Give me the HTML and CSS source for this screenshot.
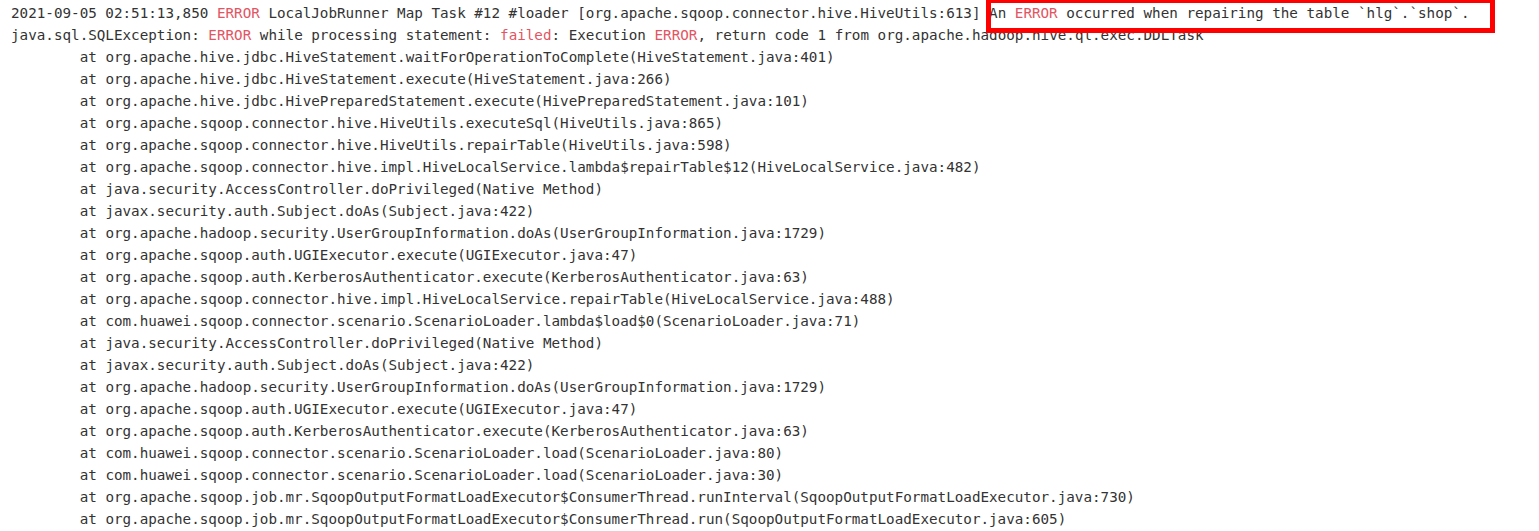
FILE: index.html
```html
<!DOCTYPE html>
<html lang="en">
<head>
<meta charset="utf-8">
<title>Log</title>
<link rel="stylesheet" href="styles.css">
</head>
<body>
<pre class="log">2021-09-05 02:51:13,850 <span class="err">ERROR</span> LocalJobRunner Map Task #12 #loader [org.apache.sqoop.connector.hive.HiveUtils:613] <span class="hl">An <span class="err">ERROR</span> occurred when repairing the table `hlg`.`shop`.</span>
java.sql.SQLException: <span class="err">ERROR</span> while processing statement: <span class="err">failed</span>: Execution <span class="err">ERROR</span>, return code 1 from org.apache.hadoop.hive.ql.exec.DDLTask
	at org.apache.hive.jdbc.HiveStatement.waitForOperationToComplete(HiveStatement.java:401)
	at org.apache.hive.jdbc.HiveStatement.execute(HiveStatement.java:266)
	at org.apache.hive.jdbc.HivePreparedStatement.execute(HivePreparedStatement.java:101)
	at org.apache.sqoop.connector.hive.HiveUtils.executeSql(HiveUtils.java:865)
	at org.apache.sqoop.connector.hive.HiveUtils.repairTable(HiveUtils.java:598)
	at org.apache.sqoop.connector.hive.impl.HiveLocalService.lambda$repairTable$12(HiveLocalService.java:482)
	at java.security.AccessController.doPrivileged(Native Method)
	at javax.security.auth.Subject.doAs(Subject.java:422)
	at org.apache.hadoop.security.UserGroupInformation.doAs(UserGroupInformation.java:1729)
	at org.apache.sqoop.auth.UGIExecutor.execute(UGIExecutor.java:47)
	at org.apache.sqoop.auth.KerberosAuthenticator.execute(KerberosAuthenticator.java:63)
	at org.apache.sqoop.connector.hive.impl.HiveLocalService.repairTable(HiveLocalService.java:488)
	at com.huawei.sqoop.connector.scenario.ScenarioLoader.lambda$load$0(ScenarioLoader.java:71)
	at java.security.AccessController.doPrivileged(Native Method)
	at javax.security.auth.Subject.doAs(Subject.java:422)
	at org.apache.hadoop.security.UserGroupInformation.doAs(UserGroupInformation.java:1729)
	at org.apache.sqoop.auth.UGIExecutor.execute(UGIExecutor.java:47)
	at org.apache.sqoop.auth.KerberosAuthenticator.execute(KerberosAuthenticator.java:63)
	at com.huawei.sqoop.connector.scenario.ScenarioLoader.load(ScenarioLoader.java:80)
	at com.huawei.sqoop.connector.scenario.ScenarioLoader.load(ScenarioLoader.java:30)
	at org.apache.sqoop.job.mr.SqoopOutputFormatLoadExecutor$ConsumerThread.runInterval(SqoopOutputFormatLoadExecutor.java:730)
	at org.apache.sqoop.job.mr.SqoopOutputFormatLoadExecutor$ConsumerThread.run(SqoopOutputFormatLoadExecutor.java:605)</pre>
</body>
</html>
```

FILE: styles.css
```css
html, body {
  margin: 0;
  padding: 0;
  background: #ffffff;
  overflow: hidden;
}

.log {
  margin: 0;
  padding: 2px 0 0 11px;
  font-family: "DejaVu Sans Mono", "Liberation Mono", monospace;
  font-size: 14.25px;
  line-height: 22px;
  color: #333333;
  tab-size: 8;
  -moz-tab-size: 8;
  white-space: pre;
}

.err {
  color: #e25563;
}

.hl {
  position: relative;
}

.hl::after {
  content: "";
  position: absolute;
  left: -3px;
  right: -25px;
  top: -6px;
  bottom: -12px;
  border: 5px solid #ff0000;
  border-top-width: 4px;
}
```
